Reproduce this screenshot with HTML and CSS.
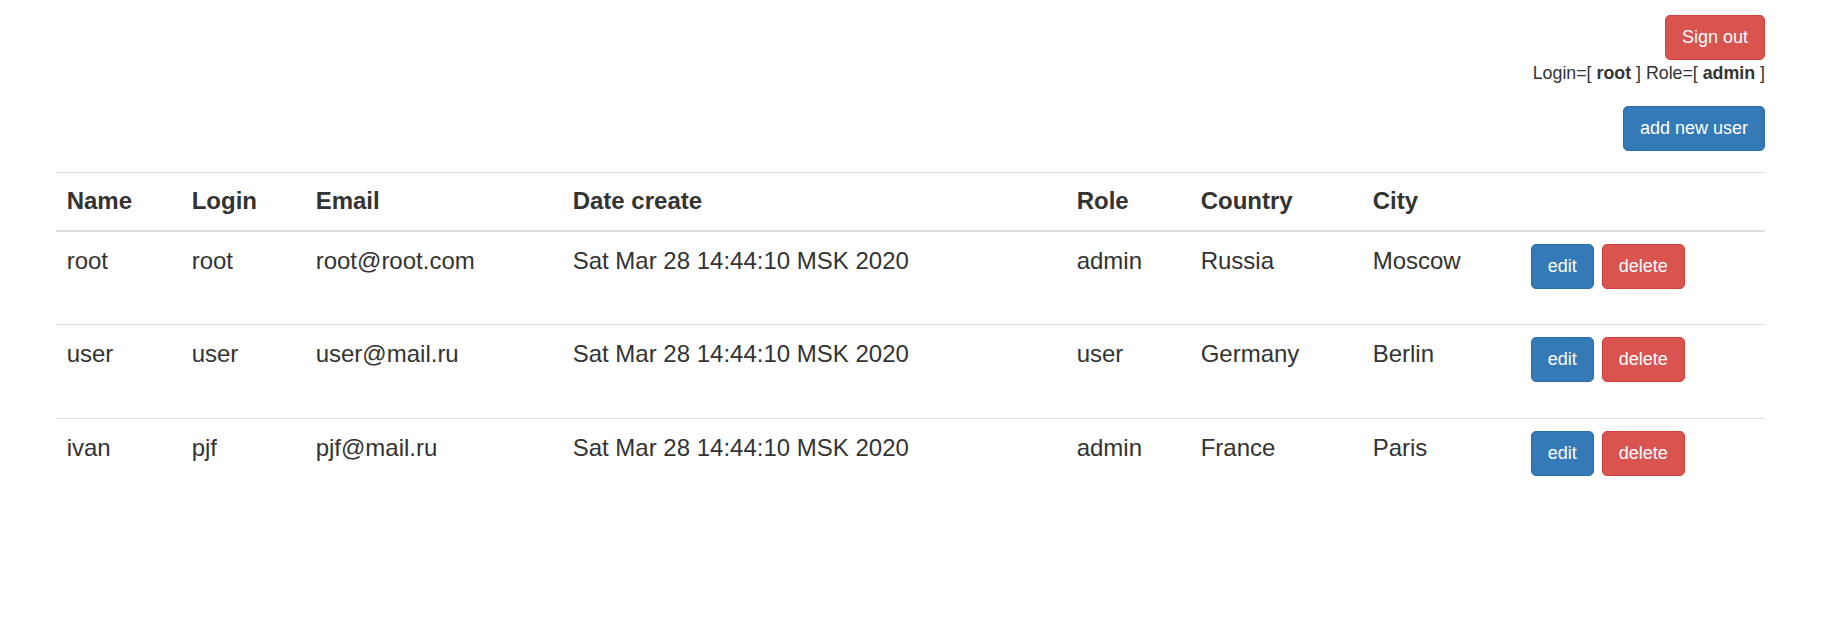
FILE: index.html
```html
<!DOCTYPE html>
<html lang="en">
<head>
<meta charset="utf-8">
<title>Users</title>
<link rel="stylesheet" href="styles.css">
</head>
<body>
<div class="page">
  <header class="top">
    <button class="btn btn-danger">Sign out</button>
    <div class="whoami">Login=[ <b>root</b> ] Role=[ <b>admin</b> ]</div>
    <button class="btn btn-primary add-btn">add new user</button>
  </header>
  <table class="users">
    <colgroup>
      <col class="c-name"><col class="c-login"><col class="c-email"><col class="c-date">
      <col class="c-role"><col class="c-country"><col class="c-city"><col class="c-actions">
    </colgroup>
    <thead>
      <tr>
        <th>Name</th><th>Login</th><th>Email</th><th>Date create</th>
        <th>Role</th><th>Country</th><th>City</th><th></th>
      </tr>
    </thead>
    <tbody>
      <tr>
        <td>root</td><td>root</td><td>root@root.com</td><td>Sat Mar 28 14:44:10 MSK 2020</td>
        <td>admin</td><td>Russia</td><td>Moscow</td>
        <td><div class="actions"><button class="btn btn-primary">edit</button><button class="btn btn-danger">delete</button></div></td>
      </tr>
      <tr>
        <td>user</td><td>user</td><td>user@mail.ru</td><td>Sat Mar 28 14:44:10 MSK 2020</td>
        <td>user</td><td>Germany</td><td>Berlin</td>
        <td><div class="actions"><button class="btn btn-primary">edit</button><button class="btn btn-danger">delete</button></div></td>
      </tr>
      <tr>
        <td>ivan</td><td>pjf</td><td>pjf@mail.ru</td><td>Sat Mar 28 14:44:10 MSK 2020</td>
        <td>admin</td><td>France</td><td>Paris</td>
        <td><div class="actions"><button class="btn btn-primary">edit</button><button class="btn btn-danger">delete</button></div></td>
      </tr>
    </tbody>
  </table>
</div>
</body>
</html>
```

FILE: styles.css
```css
html, body {
  margin: 0;
  padding: 0;
  background: #fff;
}
body {
  font-family: "Liberation Sans", Arial, sans-serif;
  font-size: 18px;
  line-height: 1.42857;
  color: #333;
}
.page {
  padding: 15px 60px 0 56px;
}
.top {
  display: flex;
  flex-direction: column;
  align-items: flex-end;
}
.whoami {
  font-size: 17.8px;
  line-height: 26px;
}
.whoami b {
  font-weight: bold;
}
.add-btn {
  margin-top: 20px;
}
.btn {
  font-family: "Liberation Sans", Arial, sans-serif;
  font-size: 18px;
  line-height: 26.67px;
  padding: 8px 16px;
  border: 1px solid transparent;
  border-radius: 5px;
  color: #fff;
  cursor: pointer;
  box-sizing: border-box;
  height: 45px;
}
.btn-danger {
  background: #d9534f;
  border-color: #d43f3a;
}
.btn-primary {
  background: #337ab7;
  border-color: #2e6da4;
}
.users {
  margin-top: 21px;
  width: 1709px;
  table-layout: fixed;
  border-collapse: collapse;
  font-size: 24px;
  line-height: 34.29px;
}
.c-name { width: 125px; }
.c-login { width: 124px; }
.c-email { width: 257px; }
.c-date { width: 504px; }
.c-role { width: 124px; }
.c-country { width: 172px; }
.c-city { width: 158px; }
.c-actions { width: 245px; }
.users th {
  text-align: left;
  font-weight: bold;
  padding: 11px 10.67px 11.67px;
  border-top: 1px solid #ddd;
  border-bottom: 2px solid #ddd;
  vertical-align: bottom;
}
.users td {
  padding: 12px 10.67px 0;
  height: 81px;
  vertical-align: top;
  border-top: 1px solid #ddd;
}
.users tbody tr:first-child td {
  border-top: 0;
  height: 80px;
}
.actions {
  display: flex;
  gap: 8px;
}
```
